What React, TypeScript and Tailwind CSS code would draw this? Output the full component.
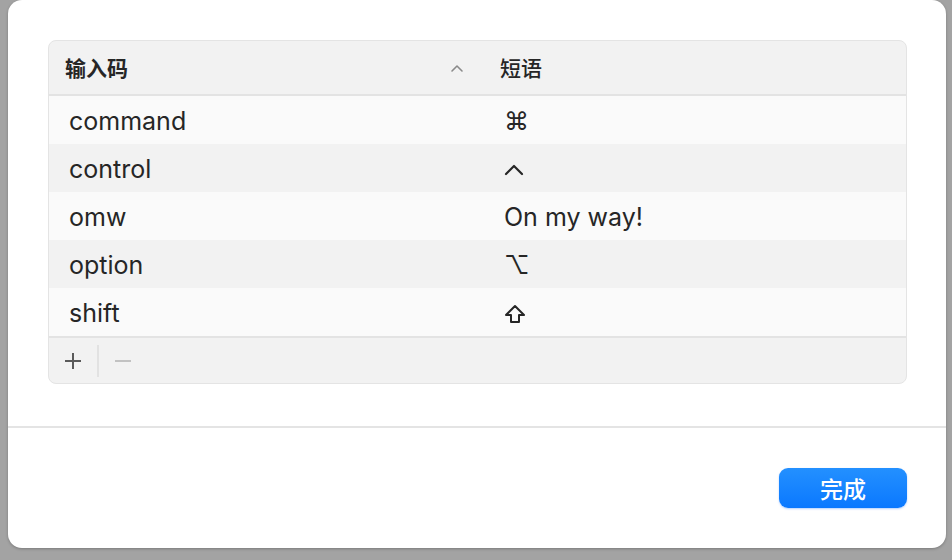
const rows = [
  { code: 'command', phrase: '⌘' },
  { code: 'control', phrase: '^' },
  { code: 'omw', phrase: 'On my way!' },
  { code: 'option', phrase: '⌥' },
  { code: 'shift', phrase: '⇧' },
]

function ChevronUp() {
  return (
    <svg width="14" height="10" viewBox="0 0 14 10" fill="none">
      <path d="M2 8 L7 3 L12 8" stroke="#8a8a8a" strokeWidth="1.6" strokeLinecap="round" strokeLinejoin="round" />
    </svg>
  )
}

function CaretGlyph() {
  return (
    <svg width="20" height="14" viewBox="0 0 20 14" fill="none">
      <path d="M2 11 L10 3 L18 11" stroke="#262626" strokeWidth="2.2" strokeLinecap="round" strokeLinejoin="round" />
    </svg>
  )
}

function ShiftGlyph() {
  return (
    <svg width="22" height="22" viewBox="0 0 22 22" fill="none">
      <path d="M11 3 L20 12 L15 12 L15 19 L7 19 L7 12 L2 12 Z" stroke="#262626" strokeWidth="2" strokeLinejoin="round" />
    </svg>
  )
}

function Phrase({ value }: { value: string }) {
  if (value === '^') return <CaretGlyph />
  if (value === '⇧') return <ShiftGlyph />
  return <span>{value}</span>
}

export default function App() {
  return (
    <div className="h-[560px] w-[952px] overflow-hidden bg-[#a3a3a3] font-['Inter','Noto_Sans_CJK_SC',sans-serif]">
      <div className="ml-[8px] flex h-[548px] w-[938px] flex-col rounded-[14px] bg-white shadow-[0_1px_3px_rgba(0,0,0,0.25)]">
        <div className="pl-[40px] pr-[39px] pt-[40px]">
          <div className="overflow-hidden rounded-[8px] border border-[#e4e4e4] bg-[#f2f2f2]">
            <div className="flex h-[55px] items-center border-b-2 border-[#e3e3e3] text-[21px] text-[#262626]">
              <div className="flex w-[435px] items-center justify-between pl-[16px] pr-[20px]">
                <span className="font-['Noto_Sans_CJK_SC',sans-serif] font-bold">输入码</span>
                <ChevronUp />
              </div>
              <div className="pl-[16px] font-['Noto_Sans_CJK_SC',sans-serif] font-medium">短语</div>
            </div>
            {rows.map((r, i) => (
              <div
                key={r.code}
                className={`flex h-[48px] items-center pt-[3px] text-[25px] text-[#262626] ${i % 2 === 0 ? 'bg-[#fafafa]' : 'bg-[#f2f2f2]'}`}
              >
                <div className="w-[435px] pl-[20px]">{r.code}</div>
                <div className="flex items-center pl-[20px]">
                  <Phrase value={r.phrase} />
                </div>
              </div>
            ))}
            <div className="flex h-[47px] items-center border-t-2 border-[#e3e3e3]">
              <div className="flex w-[48px] justify-center">
                <svg width="18" height="18" viewBox="0 0 18 18">
                  <path d="M9 1 V17 M1 9 H17" stroke="#5a5a5a" strokeWidth="2" />
                </svg>
              </div>
              <div className="h-[32px] w-[2px] bg-[#e2e2e2]" />
              <div className="flex w-[48px] justify-center">
                <svg width="18" height="18" viewBox="0 0 18 18">
                  <path d="M1 9 H17" stroke="#c2c2c2" strokeWidth="2" />
                </svg>
              </div>
            </div>
          </div>
        </div>
        <div className="mt-[42px] h-[2px] bg-[#e4e4e4]" />
        <div className="flex flex-1 items-start justify-end pl-[39px] pr-[39px] pt-[40px]">
          <button className="flex h-[40px] w-[128px] items-center justify-center rounded-[9px] bg-gradient-to-b from-[#2390ff] to-[#0a78ff] font-['Noto_Sans_CJK_SC',sans-serif] text-[23px] font-medium text-white shadow-[0_1px_2px_rgba(0,100,255,0.3)]">
            完成
          </button>
        </div>
      </div>
    </div>
  )
}
